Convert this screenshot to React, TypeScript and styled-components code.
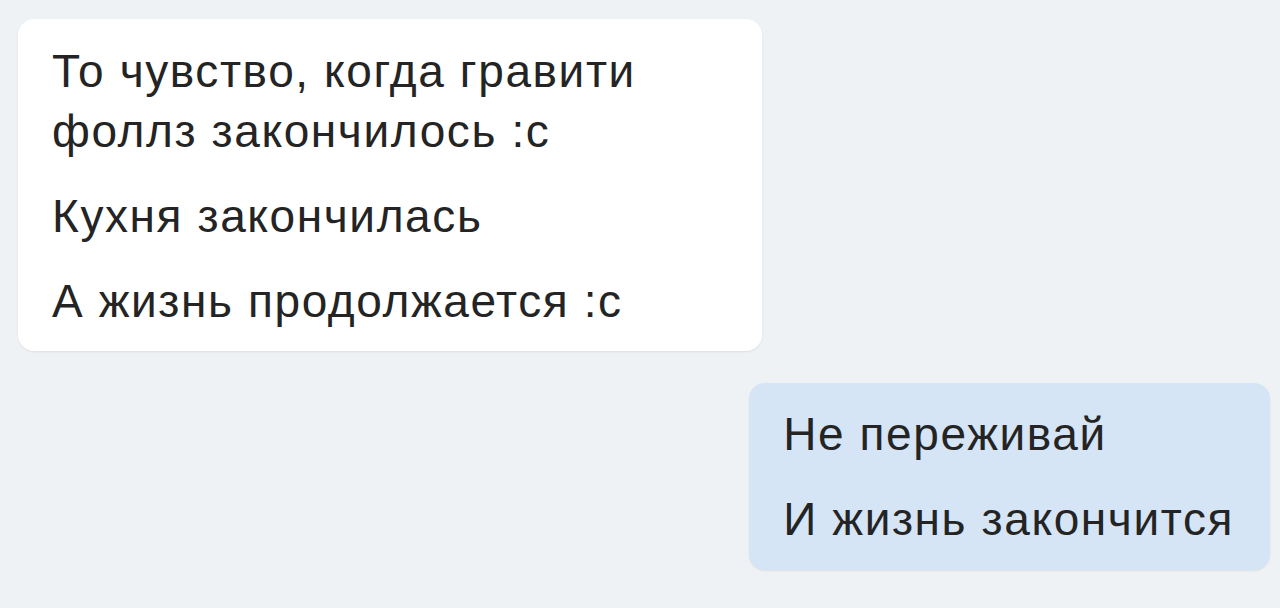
import React from 'react'
import styled, { createGlobalStyle } from 'styled-components'

const GlobalStyle = createGlobalStyle`
  html, body {
    margin: 0;
    padding: 0;
    background: #eef2f5;
  }
  body {
    font-family: "Liberation Sans", Arial, sans-serif;
  }
`

const Feed = styled.div`
  width: 1280px;
  height: 608px;
  box-sizing: border-box;
  padding: 19px 10px 0 18px;
  display: flex;
  flex-direction: column;
  gap: 32px;
  overflow: hidden;
`

interface BubbleProps {
  out?: boolean
}

const Bubble = styled.div<BubbleProps>`
  align-self: ${props => (props.out ? 'flex-end' : 'flex-start')};
  width: ${props => (props.out ? 'auto' : '744px')};
  box-sizing: border-box;
  padding: ${props => (props.out ? '21px 36px 21px 34px' : '22px 34px 20px 34px')};
  background: ${props => (props.out ? '#d5e5f5' : '#ffffff')};
  border-radius: 16px;
  box-shadow: 0 1px 2px rgba(0, 0, 0, 0.08);
  display: flex;
  flex-direction: column;
  gap: 25px;
`

const Line = styled.div`
  font-size: 46px;
  line-height: 60px;
  letter-spacing: 1.6px;
  color: #242424;
`

const incoming = [
  'То чувство, когда гравити фоллз закончилось :с',
  'Кухня закончилась',
  'А жизнь продолжается :с',
]

const outgoing = ['Не переживай', 'И жизнь закончится']

export default function App() {
  return (
    <>
      <GlobalStyle />
      <Feed>
        <Bubble>
          {incoming.map(text => (
            <Line key={text}>{text}</Line>
          ))}
        </Bubble>
        <Bubble out>
          {outgoing.map(text => (
            <Line key={text}>{text}</Line>
          ))}
        </Bubble>
      </Feed>
    </>
  )
}
